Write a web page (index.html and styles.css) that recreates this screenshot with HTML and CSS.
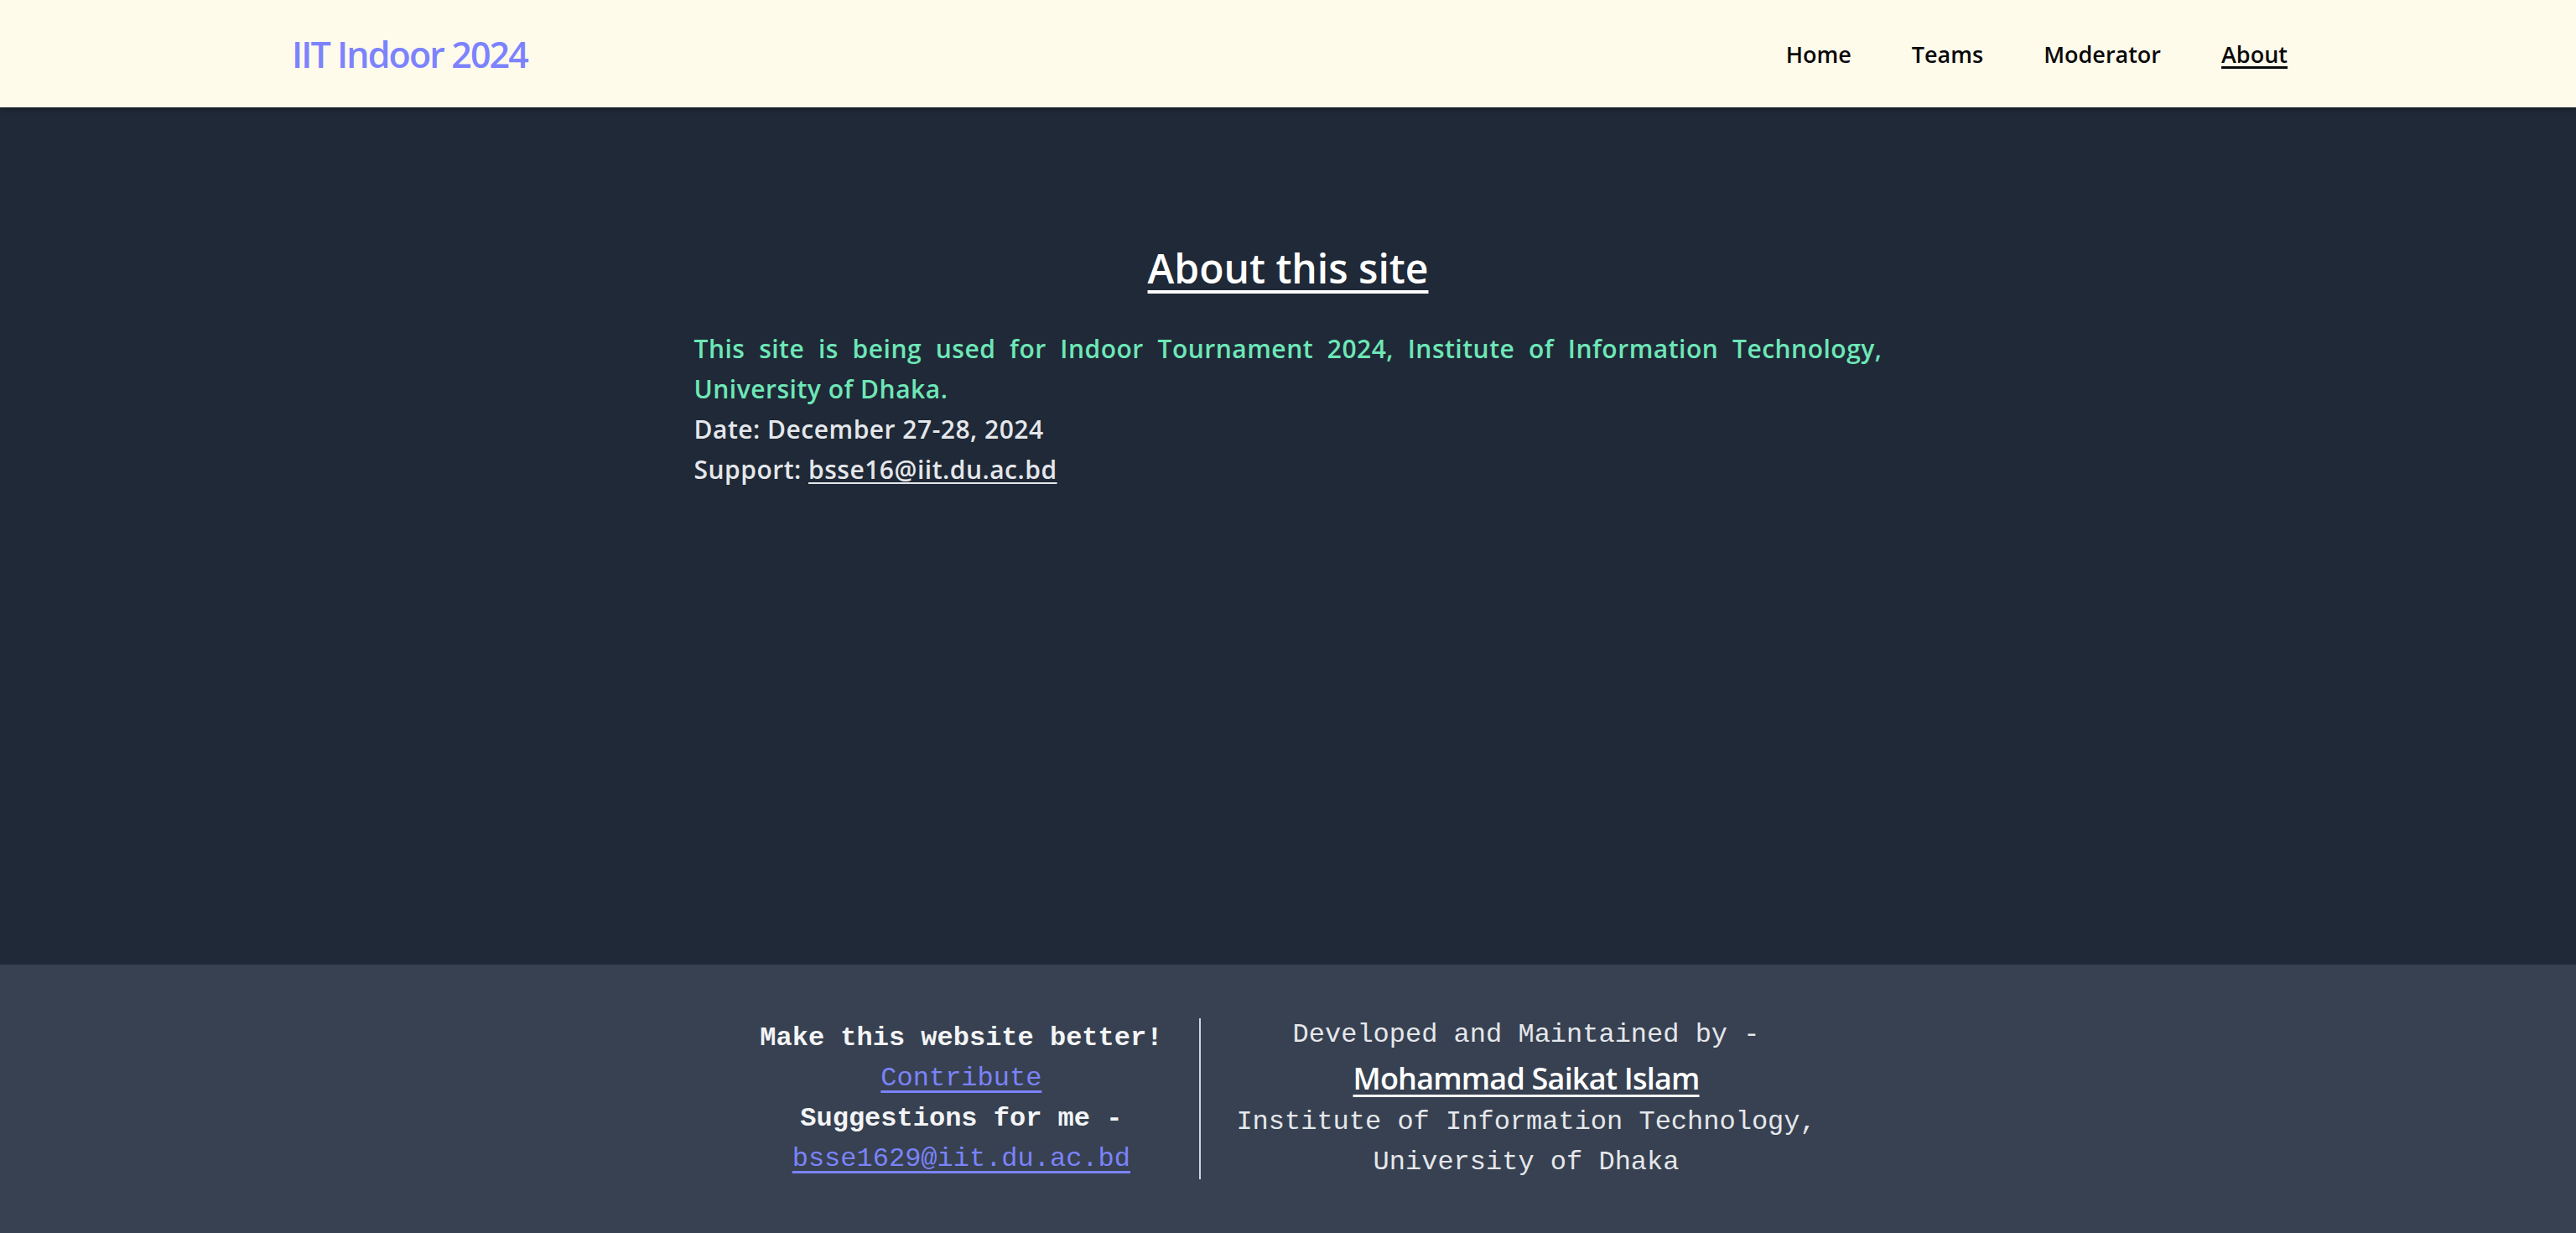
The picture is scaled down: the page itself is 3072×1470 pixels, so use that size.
FILE: index.html
```html
<!DOCTYPE html>
<html lang="en">
<head>
<meta charset="utf-8">
<title>About - IIT Indoor 2024</title>
<link rel="stylesheet" href="styles.css">
</head>
<body>
<header class="site-header">
  <div class="header-inner">
    <a class="brand" href="#">IIT Indoor 2024</a>
    <nav class="nav">
      <a class="nav-link" href="#">Home</a>
      <a class="nav-link" href="#">Teams</a>
      <a class="nav-link" href="#">Moderator</a>
      <a class="nav-link active" href="#">About</a>
    </nav>
  </div>
</header>
<main class="main">
  <section class="about">
    <h1 class="about-title">About this site</h1>
    <p class="about-desc">This site is being used for Indoor Tournament 2024, Institute of Information Technology, University of Dhaka.</p>
    <p class="about-meta">Date: December 27-28, 2024</p>
    <p class="about-meta">Support: <a class="meta-link" href="#">bsse16@iit.du.ac.bd</a></p>
  </section>
</main>
<footer class="footer">
  <div class="footer-inner">
    <div class="col col-left">
      <p class="f-line f-strong">Make this website better!</p>
      <p class="f-line"><a class="f-link" href="#">Contribute</a></p>
      <p class="f-line f-strong">Suggestions for me -</p>
      <p class="f-line"><a class="f-link" href="#">bsse1629@iit.du.ac.bd</a></p>
    </div>
    <div class="col col-right">
      <p class="f-line f-soft">Developed and Maintained by -</p>
      <p class="f-name"><a class="name-link" href="#">Mohammad Saikat Islam</a></p>
      <p class="f-line f-soft">Institute of Information Technology,</p>
      <p class="f-line f-soft">University of Dhaka</p>
    </div>
  </div>
</footer>
</body>
</html>
```
FILE: styles.css
```css
html, body {
  margin: 0;
  padding: 0;
}
body {
  min-height: 100vh;
  display: flex;
  flex-direction: column;
  background: #1f2937;
  font-family: "Open Sans", "Noto Sans", sans-serif;
}
p { margin: 0; }

.site-header {
  height: 128px;
  background: #fffbeb;
  box-shadow: 0 2px 6px rgba(0, 0, 0, 0.35);
  position: relative;
  z-index: 1;
}
.header-inner {
  width: 2384px;
  height: 100%;
  margin: 0 auto;
  display: flex;
  align-items: center;
  justify-content: space-between;
}
.brand {
  font-size: 43px;
  font-weight: 600;
  color: #7c83fd;
  text-decoration: none;
  letter-spacing: -1.9px;
  padding-left: 4px;
}
.nav {
  display: flex;
  align-items: center;
  gap: 72px;
}
.nav-link {
  font-size: 27px;
  font-weight: 600;
  color: #0a0a0a;
  text-decoration: none;
}
.nav-link.active {
  text-decoration: underline;
  text-decoration-thickness: 3px;
  text-underline-offset: 4px;
}

.main {
  flex: 1;
  padding-top: 156px;
}
.about {
  width: 1417px;
  margin: 0 auto;
}
.about-title {
  margin: 0;
  text-align: center;
  font-size: 48px;
  line-height: 72px;
  font-weight: 600;
  color: #ffffff;
  text-decoration: underline;
  text-decoration-thickness: 4px;
  text-underline-offset: 8px;
}
.about-desc {
  margin-top: 36px;
  font-size: 30px;
  line-height: 48px;
  font-weight: 600;
  color: #6ee7b7;
  text-align: justify;
  letter-spacing: 0.5px;
}
.about-meta {
  font-size: 30px;
  line-height: 48px;
  font-weight: 600;
  color: #e5e7eb;
  letter-spacing: 0.5px;
}
.meta-link {
  color: #e5e7eb;
  text-decoration: underline;
  text-decoration-thickness: 2px;
  text-underline-offset: 4px;
}

.footer {
  background: #374151;
  padding: 60px 0;
}
.footer-inner {
  display: flex;
  justify-content: center;
  align-items: center;
}
.col {
  display: flex;
  flex-direction: column;
  align-items: center;
  text-align: center;
  font-family: "Courier New", "Liberation Mono", monospace;
}
.col-left {
  padding-right: 44px;
  border-right: 2px solid #cbd5e1;
}
.col-right {
  padding-left: 42px;
}
.f-line {
  font-size: 32px;
  line-height: 48px;
  color: #f3f4f6;
}
.f-strong {
  font-weight: 700;
}
.f-soft {
  color: #e5e7eb;
}
.f-link {
  color: #7b83f9;
  text-decoration: underline;
  text-decoration-thickness: 3px;
  text-underline-offset: 6px;
}
.f-name {
  font-family: "Open Sans", "Noto Sans", sans-serif;
  font-size: 36px;
  line-height: 56px;
  font-weight: 600;
  letter-spacing: -0.8px;
}
.name-link {
  color: #ffffff;
  text-decoration: underline;
  text-decoration-thickness: 3px;
  text-underline-offset: 6px;
}
```
